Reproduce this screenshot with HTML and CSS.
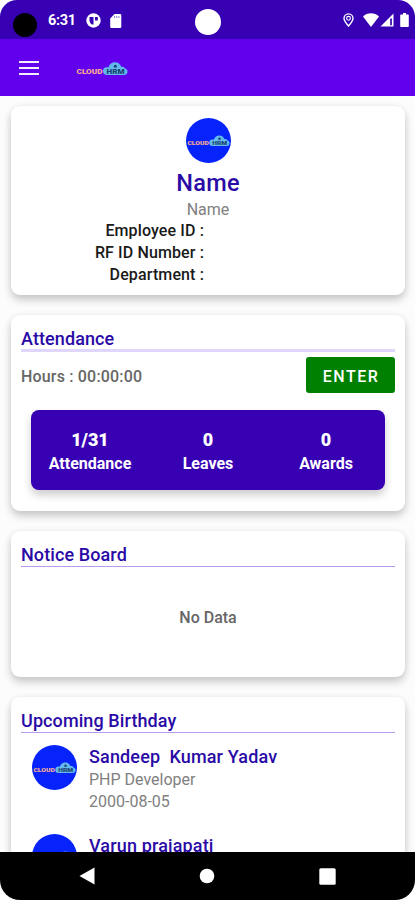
FILE: index.html
```html
<!DOCTYPE html>
<html lang="en">
<head>
    <meta charset="UTF-8">
    <meta name="viewport" content="width=device-width, initial-scale=1.0">
    <title>Cloud HRM</title>
    <link rel="stylesheet" href="styles.css">
</head>
<body>
<!-- Shared logo -->
<svg class="defs" width="0" height="0">
    <symbol id="logo" viewBox="0 0 52 14">
        <text x="0.5" y="12" class="logo-cloud" textLength="26" lengthAdjust="spacingAndGlyphs">CLOUD</text>
        <path d="M30.500 13a3.900 3.900 0 0 1-.4-7.700c1-.2 1.700-.1 2.300.1C33.300 2.200 36 .3 39 .3c3.200 0 5.400 1.800 6.200 4.500 1.800-.4 3.200.3 3.700 1.700 1.500.2 2.600 1.500 2.600 3.200 0 1.900-1.500 3.300-3.400 3.300z" fill="#62b9ec"/>
        <circle cx="39.300" cy="4.200" r="1.500" fill="#17416f"/>
        <text x="30.500" y="11.500" class="logo-hrm" textLength="18" lengthAdjust="spacingAndGlyphs">HRM</text>
    </symbol>
</svg>

<div class="phone">
    <header class="status-bar">
        <div class="lens"></div>
        <span class="time">6:31</span>
        <svg class="icon-app" width="15" height="15" viewBox="0 0 15 15">
            <circle cx="7.500" cy="7.500" r="7.200" fill="#fff"/>
            <path d="M3.500 4h4v7.500H6C4.500 10.500 3.500 9 3.500 7zM9 4h2.800v3.500H9z" fill="#3700b3"/>
        </svg>
        <svg class="icon-card" width="12" height="14" viewBox="0 0 12 14">
            <path d="M4.500 0H10a1.300 1.300 0 0 1 1.300 1.300v11.400A1.300 1.300 0 0 1 10 14H1.500A1.300 1.300 0 0 1 .2 12.700V4.500z" fill="#fff"/>
            <path d="M4.500 2v2M6.700 2v2M8.900 2v2" stroke="#8f79d4" stroke-width="1"/>
        </svg>
        <div class="camera"></div>
        <div class="status-icons">
            <svg width="11" height="14" viewBox="0 0 11 14">
                <path d="M5.500 13C2.500 9.500 1 7.300 1 5.400a4.500 4.500 0 0 1 9 0C10 7.300 8.500 9.500 5.500 13z" fill="none" stroke="#fff" stroke-width="1.400"/>
                <circle cx="5.500" cy="5.300" r="1.900" fill="#3700b3" stroke="#fff" stroke-width="1.100"/>
            </svg>
            <svg class="icon-wifi" width="16" height="14" viewBox="0 0 16 14">
                <path d="M8 14L0 3.500C2.200 1.500 5 .3 8 .3s5.800 1.200 8 3.200z" fill="#fff"/>
            </svg>
            <svg class="icon-signal" width="14" height="14" viewBox="0 0 14 14">
                <path d="M13.500.5v13H.5z" fill="#fff"/>
                <path d="M10.200 5.500h1.700v6.700h-1.700z" fill="#3700b3"/>
            </svg>
            <svg class="icon-battery" width="9" height="14" viewBox="0 0 9 14">
                <path d="M3 0h3v1.500h1.800c.6 0 1 .4 1 1V13c0 .6-.4 1-1 1H1.200c-.6 0-1-.4-1-1V2.500c0-.6.4-1 1-1H3z" fill="#fff"/>
            </svg>
        </div>
    </header>

    <nav class="app-bar">
        <button class="hamburger" aria-label="Menu">
            <span></span>
            <span></span>
            <span></span>
        </button>
        <svg class="brand" width="52" height="14"><use href="#logo"/></svg>
    </nav>

    <main class="content">
        <section class="card profile">
            <div class="avatar"><svg width="43" height="12"><use href="#logo"/></svg></div>
            <h1>Name</h1>
            <p class="role">Name</p>
            <div class="details">
                <span>Employee ID :</span>
                <span>RF ID Number :</span>
                <span>Department :</span>
            </div>
        </section>

        <section class="card attendance">
            <h2 class="thick">Attendance</h2>
            <div class="hours-row">
                <span class="hours">Hours : 00:00:00</span>
                <button class="enter">ENTER</button>
            </div>
            <div class="stats">
                <div class="stat"><b>1/31</b><span>Attendance</span></div>
                <div class="stat"><b>0</b><span>Leaves</span></div>
                <div class="stat"><b>0</b><span>Awards</span></div>
            </div>
        </section>

        <section class="card notice">
            <h2>Notice Board</h2>
            <p class="no-data">No Data</p>
        </section>

        <section class="card birthday">
            <h2>Upcoming Birthday</h2>
            <div class="person">
                <div class="avatar"><svg width="43" height="12"><use href="#logo"/></svg></div>
                <div class="person-info">
                    <h3>Sandeep&nbsp; Kumar Yadav</h3>
                    <p>PHP Developer</p>
                    <p>2000-08-05</p>
                </div>
            </div>
            <div class="person">
                <div class="avatar"><svg width="43" height="12"><use href="#logo"/></svg></div>
                <div class="person-info">
                    <h3>Varun prajapati</h3>
                </div>
            </div>
        </section>
    </main>

    <footer class="nav-bar">
        <svg width="16" height="18" viewBox="0 0 16 18"><path d="M15.500.5v17L.5 9z" fill="#fff"/></svg>
        <svg width="16" height="16" viewBox="0 0 16 16"><circle cx="8" cy="8" r="7.300" fill="#fff"/></svg>
        <svg width="17" height="17" viewBox="0 0 17 17"><rect x=".3" y=".3" width="16.400" height="16.400" rx="1.500" fill="#fff"/></svg>
    </footer>
</div>
</body>
</html>
```
FILE: styles.css
```css
* {
    box-sizing: border-box;
}

body {
    margin: 0;
    font-family: Roboto, "Liberation Sans", sans-serif;
    background: #fff;
    overflow: hidden;
}

h1, h2, h3, p {
    margin: 0;
    font-weight: 500;
}

svg {
    display: block;
}

.defs {
    position: absolute;
}

.logo-cloud {
    font: 900 7.5px Roboto, sans-serif;
    fill: #f9ad92;
}

.logo-hrm {
    font: 900 6.5px Roboto, sans-serif;
    fill: #17416f;
}

.phone {
    display: flex;
    flex-direction: column;
    height: 900px;
    border-radius: 17px 17px 20px 20px;
    overflow: hidden;
}

/* Status bar */
.status-bar {
    position: relative;
    display: flex;
    align-items: center;
    flex: none;
    height: 39px;
    padding: 1px 6px 0 13px;
    background: #3700b3;
    color: #fff;
}

.lens {
    width: 24px;
    height: 24px;
    margin-top: 9px;
    border-radius: 50%;
    background: #000;
}

.time {
    width: 38px;
    margin-left: 11px;
    padding-top: 1px;
    font-size: 14.5px;
    font-weight: 700;
    letter-spacing: -0.3px;
}

.icon-app {
    margin-top: 1px;
}

.icon-card {
    margin: 1px 0 0 9px;
}

/* Front camera cutout over the bar */
.camera {
    position: absolute;
    top: 9px;
    left: 195px;
    width: 26px;
    height: 26px;
    border-radius: 50%;
    background: #fff;
}

.status-icons {
    display: flex;
    margin-left: auto;
}

.icon-wifi {
    margin-left: 9px;
}

.icon-signal {
    margin-left: 1px;
}

.icon-battery {
    margin-left: 6px;
}

/* App bar */
.app-bar {
    display: flex;
    align-items: center;
    flex: none;
    height: 57px;
    padding-left: 19px;
    background: #6200ee;
}

.hamburger {
    display: flex;
    flex-direction: column;
    gap: 4px;
    width: 20px;
    padding: 0;
    border: none;
    background: none;
}

.hamburger span {
    height: 2px;
    background: #f3eafe;
}

.brand {
    margin: 2px 0 0 37px;
}

/* Cards */
.content {
    flex: 1;
    min-height: 0;
    padding: 10px 10px 0 11px;
    background: #fcfcfc;
    overflow: hidden;
}

.card {
    margin-bottom: 20px;
    padding: 12px 10px 0;
    border-radius: 9px;
    background: #fff;
    box-shadow: 0 5px 9px rgba(0, 0, 0, 0.2), 0 0 7px rgba(0, 0, 0, 0.05);
}

.card h2 {
    height: 24px;
    border-bottom: 1px solid #b99af0;
    color: #2a0aa6;
    font-size: 18px;
    line-height: 23px;
    letter-spacing: 0.1px;
}

.card h2.thick {
    border-bottom: 3px solid #e0d5fb;
    height: 25px;
}

.avatar {
    display: flex;
    align-items: center;
    justify-content: center;
    flex: none;
    width: 45px;
    height: 45px;
    padding-top: 1px;
    border-radius: 50%;
    background: #0623fb;
    overflow: hidden;
}

.profile {
    display: flex;
    flex-direction: column;
    align-items: center;
    height: 189px;
}

.profile h1 {
    margin-top: 5px;
    color: #2a0aa6;
    font-size: 23.5px;
    line-height: 30px;
    letter-spacing: 0.3px;
}

.role {
    color: #808080;
    font-size: 16px;
    font-weight: 400;
    line-height: 24px;
}

.details {
    display: flex;
    flex-direction: column;
    align-self: flex-start;
    width: 183px;
    margin-top: -2px;
    color: #1a1a1a;
    font-size: 16px;
    font-weight: 500;
    line-height: 22px;
    letter-spacing: 0.12px;
    text-align: right;
}

.attendance {
    height: 196px;
}

.hours-row {
    display: flex;
    align-items: center;
    justify-content: space-between;
    margin-top: 5px;
}

.hours {
    padding-top: 2px;
    color: #666;
    font-size: 16px;
    font-weight: 500;
    letter-spacing: 0.18px;
}

.enter {
    width: 89px;
    height: 36px;
    padding: 2px 0 0 1px;
    border: none;
    border-radius: 3px;
    background: #008000;
    color: #fff;
    font: 500 16px Roboto, sans-serif;
    letter-spacing: 1.5px;
}

.stats {
    display: grid;
    grid-template-columns: repeat(3, 1fr);
    height: 80px;
    margin: 17px 10px 0;
    padding-top: 18px;
    border-radius: 8px;
    background: #3700b3;
    color: #fff;
    box-shadow: 0 5px 9px rgba(0, 0, 0, 0.2);
}

.stat {
    display: flex;
    flex-direction: column;
    align-items: center;
    font-size: 16px;
    font-weight: 700;
}

.stat b {
    font-size: 18px;
    line-height: 24px;
}

.stat span {
    line-height: 23px;
}

.notice {
    height: 146px;
}

.no-data {
    margin-top: 39px;
    color: #666;
    font-size: 16px;
    line-height: 24px;
    text-align: center;
}

.birthday {
    height: 300px;
}

.person {
    display: flex;
    height: 89px;
    padding: 12px 0 0 11px;
}

.person-info {
    margin-left: 12px;
    color: #808080;
    font-size: 16px;
    line-height: 22px;
}

.person-info h3 {
    margin-bottom: 1px;
    color: #2a0aa6;
    font-size: 18px;
    line-height: 23px;
    letter-spacing: 0.15px;
}

.person-info p {
    font-weight: 400;
}

/* System navigation */
.nav-bar {
    display: flex;
    align-items: center;
    justify-content: space-between;
    flex: none;
    height: 48px;
    padding: 0 79px;
    background: #000;
}
```
